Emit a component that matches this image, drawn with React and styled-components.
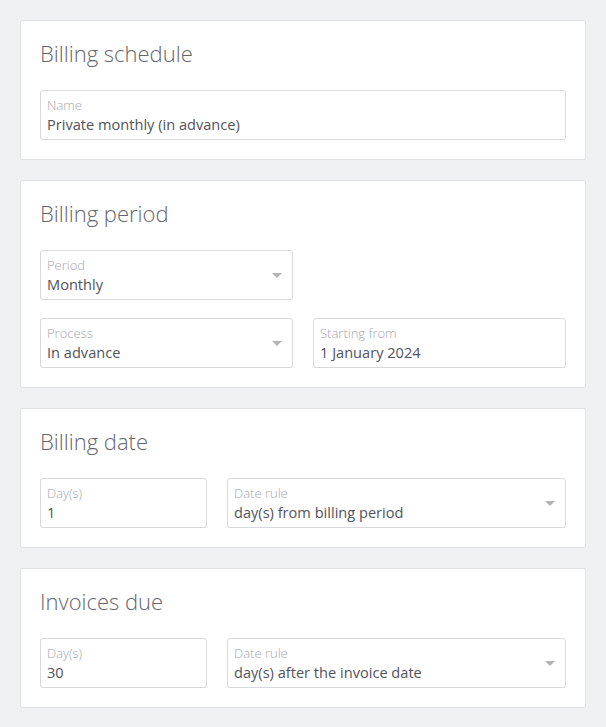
import React from "react";
import styled, { createGlobalStyle } from "styled-components";

const GlobalStyle = createGlobalStyle`
  html, body {
    margin: 0;
    padding: 0;
    background: #eff0f2;
  }
  body {
    font-family: "Open Sans", "Noto Sans", sans-serif;
  }
  * {
    box-sizing: border-box;
  }
`;

const App = () => {
  return (
    <Page>
      <GlobalStyle />
      <Card>
        <Title>Billing schedule</Title>
        <Field label="Name" value="Private monthly (in advance)" />
      </Card>

      <Card>
        <Title>Billing period</Title>
        <Grid cols="1fr 1fr">
          <Field label="Period" value="Monthly" select />
          <div />
          <Field label="Process" value="In advance" select />
          <Field label="Starting from" value="1 January 2024" />
        </Grid>
      </Card>

      <Card>
        <Title>Billing date</Title>
        <Grid cols="167px 1fr">
          <Field label="Day(s)" value="1" />
          <Field label="Date rule" value="day(s) from billing period" select />
        </Grid>
      </Card>

      <Card>
        <Title>Invoices due</Title>
        <Grid cols="167px 1fr">
          <Field label="Day(s)" value="30" />
          <Field label="Date rule" value="day(s) after the invoice date" select />
        </Grid>
      </Card>
    </Page>
  );
};

const Field = ({ label, value, select }) => (
  <FieldBox>
    <Label>{label}</Label>
    <Value>{value}</Value>
    {select && <Caret />}
  </FieldBox>
);

const Page = styled.div`
  display: flex;
  flex-direction: column;
  gap: 20px;
  padding: 20px;
`;

const Card = styled.section`
  background: #fff;
  border: 1px solid #e2e3e6;
  border-radius: 2px;
  padding: 19px;
`;

const Title = styled.h2`
  margin: 0 0 24px;
  font-size: 22px;
  line-height: 26px;
  font-weight: 300;
  color: #65656d;
`;

const Grid = styled.div`
  display: grid;
  grid-template-columns: ${(p) => p.cols};
  column-gap: 20px;
  row-gap: 18px;
`;

const FieldBox = styled.div`
  position: relative;
  height: 50px;
  border: 1px solid #d8d9dc;
  border-radius: 3px;
  padding: 6px 6px 0;
`;

const Label = styled.div`
  font-size: 13px;
  line-height: 17px;
  color: #a6a6ac;
  font-weight: 300;
`;

const Value = styled.div`
  font-size: 14.6px;
  line-height: 21px;
  color: #52525c;
`;

const Caret = styled.span`
  position: absolute;
  right: 10px;
  top: 22px;
  width: 0;
  height: 0;
  border-left: 5px solid transparent;
  border-right: 5px solid transparent;
  border-top: 5px solid #b3b3b8;
`;

export default App;
